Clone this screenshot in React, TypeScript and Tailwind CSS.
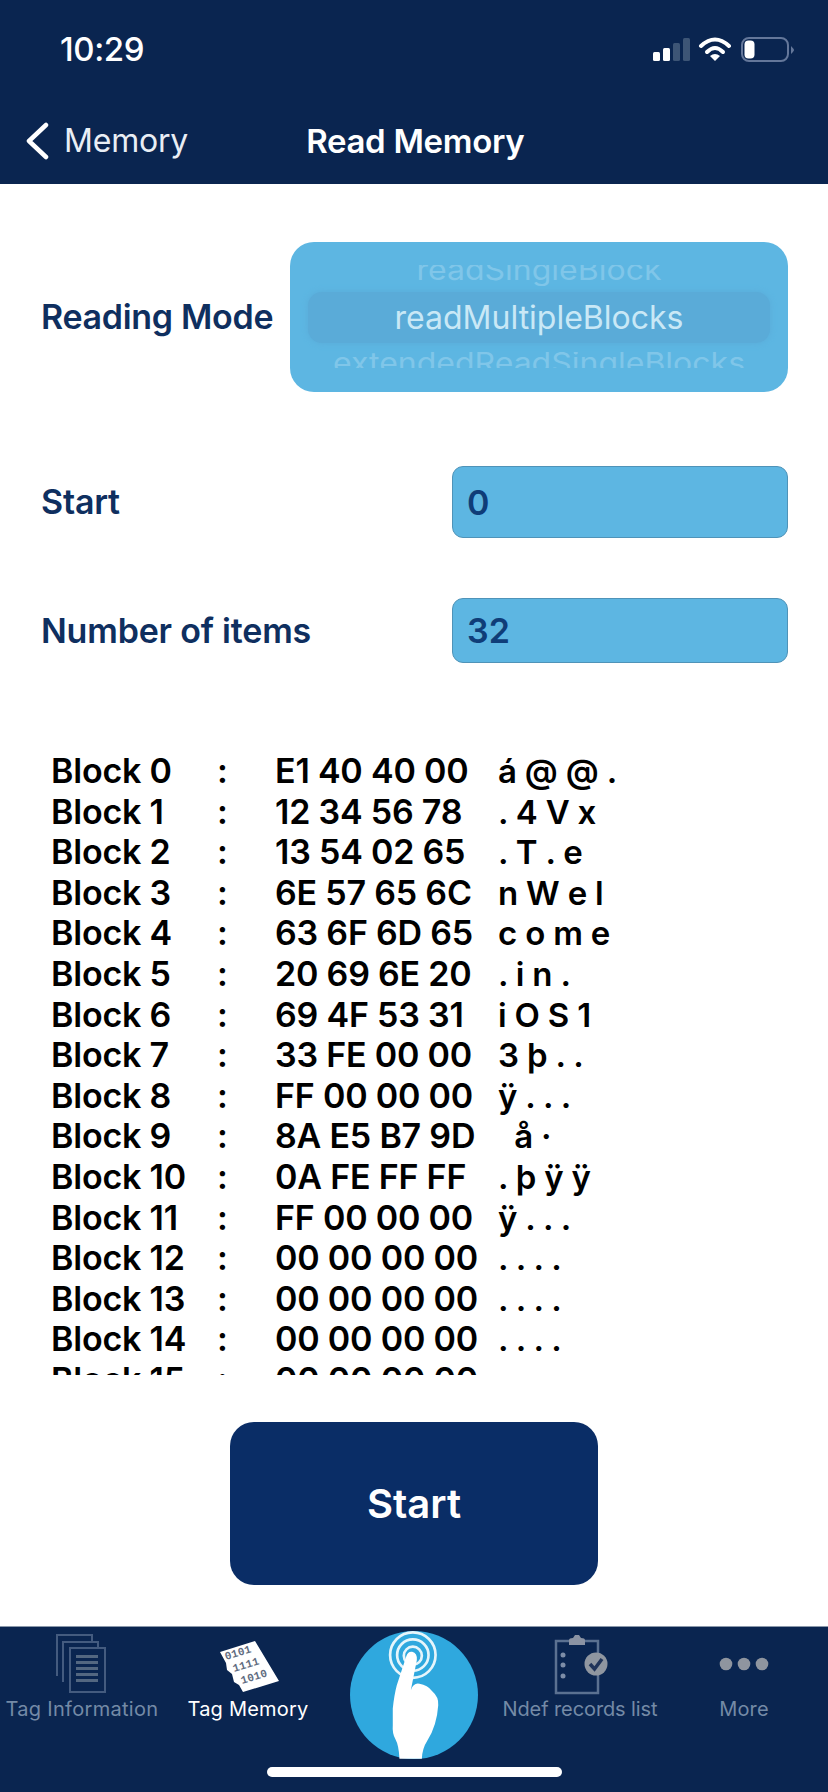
import React from "react";

const rows: [string, string, string][] = [
  ["Block 0", "E1 40 40 00", "á @ @ ."],
  ["Block 1", "12 34 56 78", ". 4 V x"],
  ["Block 2", "13 54 02 65", ". T . e"],
  ["Block 3", "6E 57 65 6C", "n W e l"],
  ["Block 4", "63 6F 6D 65", "c o m e"],
  ["Block 5", "20 69 6E 20", ". i n ."],
  ["Block 6", "69 4F 53 31", "i O S 1"],
  ["Block 7", "33 FE 00 00", "3 þ . ."],
  ["Block 8", "FF 00 00 00", "ÿ . . ."],
  ["Block 9", "8A E5 B7 9D", "  å ·"],
  ["Block 10", "0A FE FF FF", ". þ ÿ ÿ"],
  ["Block 11", "FF 00 00 00", "ÿ . . ."],
  ["Block 12", "00 00 00 00", ". . . ."],
  ["Block 13", "00 00 00 00", ". . . ."],
  ["Block 14", "00 00 00 00", ". . . ."],
  ["Block 15", "00 00 00 00", ". . . ."],
];

function StatusIcons() {
  return (
    <svg width="145" height="26" viewBox="650 37 145 26" className="block">
      <rect x="653" y="52" width="7" height="9" rx="1.5" fill="#fff" />
      <rect x="663" y="48" width="7" height="13" rx="1.5" fill="#fff" />
      <rect x="673" y="43" width="7" height="18" rx="1.5" fill="#3d5576" />
      <rect x="683" y="38" width="7" height="23" rx="1.5" fill="#3d5576" />
      <path d="M701 46 Q715 33 729 46" fill="none" stroke="#fff" strokeWidth="4" strokeLinecap="round" />
      <path d="M707 52 Q715 44 723 52" fill="none" stroke="#fff" strokeWidth="4" strokeLinecap="round" />
      <path d="M710 56 Q715 52 720 56 L715 61 Z" fill="#fff" />
      <rect x="742" y="38" width="46" height="23" rx="7" fill="none" stroke="#64779a" strokeWidth="2" />
      <rect x="744.5" y="40.5" width="10" height="18" rx="4" fill="#fff" />
      <path d="M791 46 Q794 49 794 50 Q794 51 791 54 Z" fill="#64779a" />
    </svg>
  );
}

function TagInfoIcon() {
  return (
    <svg width="60" height="64" viewBox="54 1632 60 64" className="block">
      <g fill="#0a2550" stroke="#445b7f" strokeWidth="2">
        <path d="M59 1677 V1636 H94 V1642" />
        <path d="M65 1683 V1643 H100 V1649" />
        <rect x="72" y="1649" width="35" height="44" />
      </g>
      <g fill="#536781">
        <rect x="78" y="1656" width="22" height="3" />
        <rect x="78" y="1662" width="22" height="3" />
        <rect x="78" y="1668" width="22" height="3" />
        <rect x="78" y="1674" width="22" height="3" />
        <rect x="78" y="1680" width="22" height="3" />
      </g>
    </svg>
  );
}

function TagMemoryIcon() {
  return (
    <svg width="64" height="54" viewBox="216 1636 64 54" className="block">
      <path d="M220 1649 L255 1638 L279 1678 L243 1689 L239 1682 L234 1679 L232 1671 L227 1667 L226 1660 Z" fill="#fff" />
      <g fill="#5f6c80" fontFamily="'Liberation Mono', monospace" fontSize="11" fontWeight="700">
        <text x="226" y="1657" transform="rotate(-17 226 1657)" textLength="27">0101</text>
        <text x="234" y="1669" transform="rotate(-17 234 1669)" textLength="27">1111</text>
        <text x="242" y="1681" transform="rotate(-17 242 1681)" textLength="27">1010</text>
      </g>
    </svg>
  );
}

function NdefIcon() {
  return (
    <svg width="60" height="62" viewBox="548 1633 60 62" className="block">
      <path d="M567 1641 H554 V1693 H596 V1672 M596 1654 V1641 H583" fill="none" stroke="#5b7191" strokeWidth="2.5" />
      <path d="M567 1645 V1640 Q567 1638 571 1638 L573 1635 H577 L579 1638 Q583 1638 583 1640 V1645 Z" fill="#8b93a3" />
      <circle cx="561" cy="1655" r="2.5" fill="#7e8ea8" />
      <circle cx="561" cy="1665" r="2.5" fill="#7e8ea8" />
      <circle cx="561" cy="1676" r="2.5" fill="#7e8ea8" />
      <circle cx="594" cy="1664" r="11.5" fill="#8f96a0" />
      <path d="M588 1664 L592.5 1669 L600 1659" fill="none" stroke="#20345a" strokeWidth="3.5" />
    </svg>
  );
}

function MoreIcon() {
  return (
    <svg width="50" height="14" viewBox="719 1656 50 14" className="block">
      <circle cx="726" cy="1663" r="6.3" fill="#8f959f" />
      <circle cx="744" cy="1663" r="6.3" fill="#8f959f" />
      <circle cx="762" cy="1663" r="6.3" fill="#8f959f" />
    </svg>
  );
}

function HandButton() {
  return (
    <svg width="128" height="128" viewBox="30 18 383 383" className="block">
      <circle cx="221.5" cy="209.5" r="191.5" fill="#2fa8de" />
      <g fill="none" stroke="#e6f5fb" strokeWidth="8">
        <circle cx="218" cy="90" r="68" />
        <circle cx="218" cy="90" r="47" />
        <circle cx="218" cy="92" r="27" />
      </g>
      <path
        d="M198 95 Q203 78 216 80 Q232 84 230 105 L212 195 Q220 172 238 176 Q262 180 276 198 Q296 215 294 240 Q290 300 262 345 Q246 370 245 400 L178 400 Q176 360 166 342 Q156 325 158 300 L158 250 Q162 210 170 180 Z"
        fill="#fff"
      />
    </svg>
  );
}

function Tab({
  label,
  active,
  icon,
  w,
  text,
  pad,
}: {
  label: string;
  active?: boolean;
  icon: React.ReactNode;
  w: string;
  text: string;
  pad: string;
}) {
  return (
    <div className={`${w} flex flex-col items-center`}>
      <div className={`h-[68px] flex items-end justify-center ${pad}`}>{icon}</div>
      <span className={`text-[20px] leading-[28px] whitespace-nowrap ${text} ${active ? "text-white" : "text-[#748aa6]"}`}>
        {label}
      </span>
    </div>
  );
}

export default function App() {
  return (
    <div className="w-[828px] h-[1792px] bg-white flex flex-col font-['Inter','Liberation_Sans',sans-serif] overflow-hidden">
      <header className="h-[184px] bg-[#0a2550] text-white flex flex-col">
        <div className="h-[100px] flex items-start justify-between pl-[60px] pr-[33px]">
          <span className="text-[33px] leading-[38px] mt-[30px] font-medium tracking-[-0.4px]">10:29</span>
          <div className="mt-[37px]">
            <StatusIcons />
          </div>
        </div>
        <div className="flex items-center h-[81px] pl-[25px]">
          <svg width="24" height="38" viewBox="0 0 24 38" className="block">
            <path d="M21 3 L4 19 L21 35" fill="none" stroke="#fff" strokeWidth="4.5" strokeLinecap="round" strokeLinejoin="round" />
          </svg>
          <span className="text-[32px] leading-[40px] ml-[15px] text-[#e9eef5] tracking-[-0.2px]">Memory</span>
          <span className="text-[33px] leading-[40px] ml-[118px] font-semibold tracking-[-0.3px]">Read Memory</span>
        </div>
      </header>

      <main className="flex-1 flex flex-col">
        <div className="flex items-center mt-[58px] pl-[41px] pr-[40px] justify-between">
          <span className="text-[34px] leading-[40px] font-semibold text-[#0f2f5f] tracking-[-0.3px]">Reading Mode</span>
          <div className="w-[498px] h-[150px] bg-[#5db6e2] rounded-[24px] pt-[23px] flex flex-col text-center">
            <div className="h-[21px] overflow-hidden flex items-end justify-center text-[#80c6e9] text-[32px] leading-[32px]">
              <span className="whitespace-nowrap scale-y-[0.9]">readSingleBlock</span>
            </div>
            <div className="mt-[6px] mx-[18px] h-[51px] rounded-[14px] bg-[#5aabd8] shadow-[0_0_6px_#5aabd8] flex items-center justify-center text-[#c9e8f6] text-[32px] leading-[40px]">
              readMultipleBlocks
            </div>
            <div className="mt-[9px] h-[16px] overflow-hidden text-[#80c6e9] text-[32px] leading-[32px] whitespace-nowrap">
              <span className="block scale-y-[0.9] -translate-y-[5px]">extendedReadSingleBlocks</span>
            </div>
          </div>
        </div>

        <div className="flex items-center justify-between mt-[74px] pl-[41px] pr-[40px]">
          <span className="text-[34px] leading-[40px] font-semibold text-[#0f2f5f] tracking-[-0.2px]">Start</span>
          <div className="w-[336px] h-[72px] bg-[#5db6e2] border border-[#4f93b8] rounded-[11px] pl-[14px] flex items-center text-[34px] font-semibold text-[#0f3d78]">
            0
          </div>
        </div>

        <div className="flex items-center justify-between mt-[60px] pl-[41px] pr-[40px]">
          <span className="text-[34px] leading-[40px] font-semibold text-[#0f2f5f] tracking-[-0.2px]">Number of items</span>
          <div className="w-[336px] h-[65px] bg-[#5db6e2] border border-[#4f93b8] rounded-[11px] pl-[14px] flex items-center text-[34px] font-semibold text-[#0f3d78]">
            32
          </div>
        </div>

        <div className="mt-[88px] h-[624px] overflow-hidden pl-[51px] text-[34px] leading-[40.6px] font-semibold text-black tracking-[-0.2px]">
          {rows.map(([a, b, c]) => (
            <div key={a} className="flex whitespace-pre">
              <span className="w-[166px]">{a}</span>
              <span className="w-[58px]">:</span>
              <span className="w-[223px]">{b}</span>
              <span className="text-[33px]">{c}</span>
            </div>
          ))}
        </div>

        <div className="mt-[47px] flex justify-center">
          <div className="w-[368px] h-[163px] rounded-[24px] bg-[#0a2d66] flex items-center justify-center text-white text-[40px] font-semibold">
            Start
          </div>
        </div>
      </main>

      <nav className="h-[166px] bg-[#0a2550] border-t border-[#8a98aa] flex items-start relative">
        <Tab w="w-[164px]" label="Tag Information" icon={<TagInfoIcon />} text="tracking-[0.3px]" pad="pb-0" />
        <Tab w="w-[168px]" label="Tag Memory" active icon={<TagMemoryIcon />} text="tracking-[0.2px]" pad="pb-[2px]" />
        <div className="w-[164px] flex justify-center pt-[4px]">
          <HandButton />
        </div>
        <Tab w="w-[168px]" label="Ndef records list" icon={<NdefIcon />} text="tracking-[-0.1px]" pad="pb-0" />
        <Tab w="w-[160px]" label="More" icon={<MoreIcon />} text="tracking-[0.2px]" pad="pb-[24px]" />
        <div className="absolute left-[267px] top-[140px] w-[295px] h-[10px] rounded-full bg-white" />
      </nav>
    </div>
  );
}
